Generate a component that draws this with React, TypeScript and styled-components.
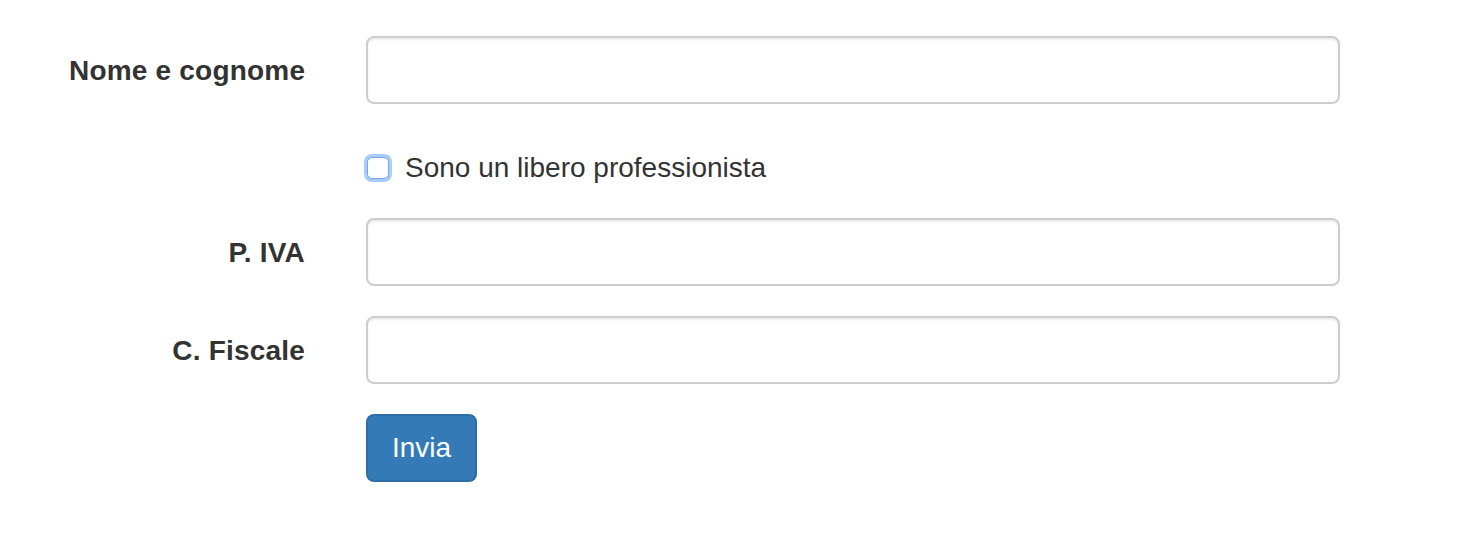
import React from "react";
import styled, { createGlobalStyle } from "styled-components";

const Global = createGlobalStyle`
  html, body { margin: 0; padding: 0; background: #fff; }
  body { font-family: "Liberation Sans", Arial, Helvetica, sans-serif; color: #333; }
  * { box-sizing: border-box; }
`;

const Form = styled.form`
  padding: 36px 0 0 69px;
  display: grid;
  grid-template-columns: 236px 974px;
  column-gap: 61px;
  row-gap: 30px;
  align-items: start;
`;

const Label = styled.label`
  font-size: 28px;
  font-weight: 700;
  line-height: 40px;
  padding-top: 15px;
  text-align: right;
  white-space: nowrap;
  letter-spacing: 0.2px;
  color: #333;
`;

const Input = styled.input`
  display: block;
  width: 100%;
  height: 68px;
  padding: 12px 24px;
  font-size: 28px;
  font-family: inherit;
  color: #555;
  background: #fff;
  border: 2px solid #ccc;
  border-radius: 8px;
  box-shadow: inset 0 2px 2px rgba(0, 0, 0, 0.075);
  outline: none;
`;

const Offset = styled.div`
  grid-column: 2;
`;

const CheckRow = styled.label`
  display: flex;
  align-items: center;
  padding-top: 14px;
  height: 54px;
  font-size: 28px;
  line-height: 40px;
  color: #333;
  cursor: pointer;
`;

const Box = styled.span`
  flex: none;
  width: 22px;
  height: 22px;
  margin-left: 1px;
  margin-right: 16px;
  background: #fff;
  border: 1.5px solid #74a6ec;
  border-radius: 5px;
  box-shadow: 0 0 0 3px #a9cdf7;
`;

const Button = styled.button`
  height: 68px;
  padding: 12px 24px;
  font-family: inherit;
  font-size: 28px;
  line-height: 40px;
  color: #fff;
  background: #337ab7;
  border: 2px solid #2e6da4;
  border-radius: 8px;
  cursor: pointer;
`;

export default function App() {
  return (
    <>
      <Global />
      <Form onSubmit={(e) => e.preventDefault()}>
        <Label htmlFor="nome">Nome e cognome</Label>
        <Input id="nome" type="text" />
        <Offset>
          <CheckRow>
            <Box />
            Sono un libero professionista
          </CheckRow>
        </Offset>
        <Label htmlFor="piva">P. IVA</Label>
        <Input id="piva" type="text" />
        <Label htmlFor="cf">C. Fiscale</Label>
        <Input id="cf" type="text" />
        <Offset>
          <Button type="submit">Invia</Button>
        </Offset>
      </Form>
    </>
  );
}
